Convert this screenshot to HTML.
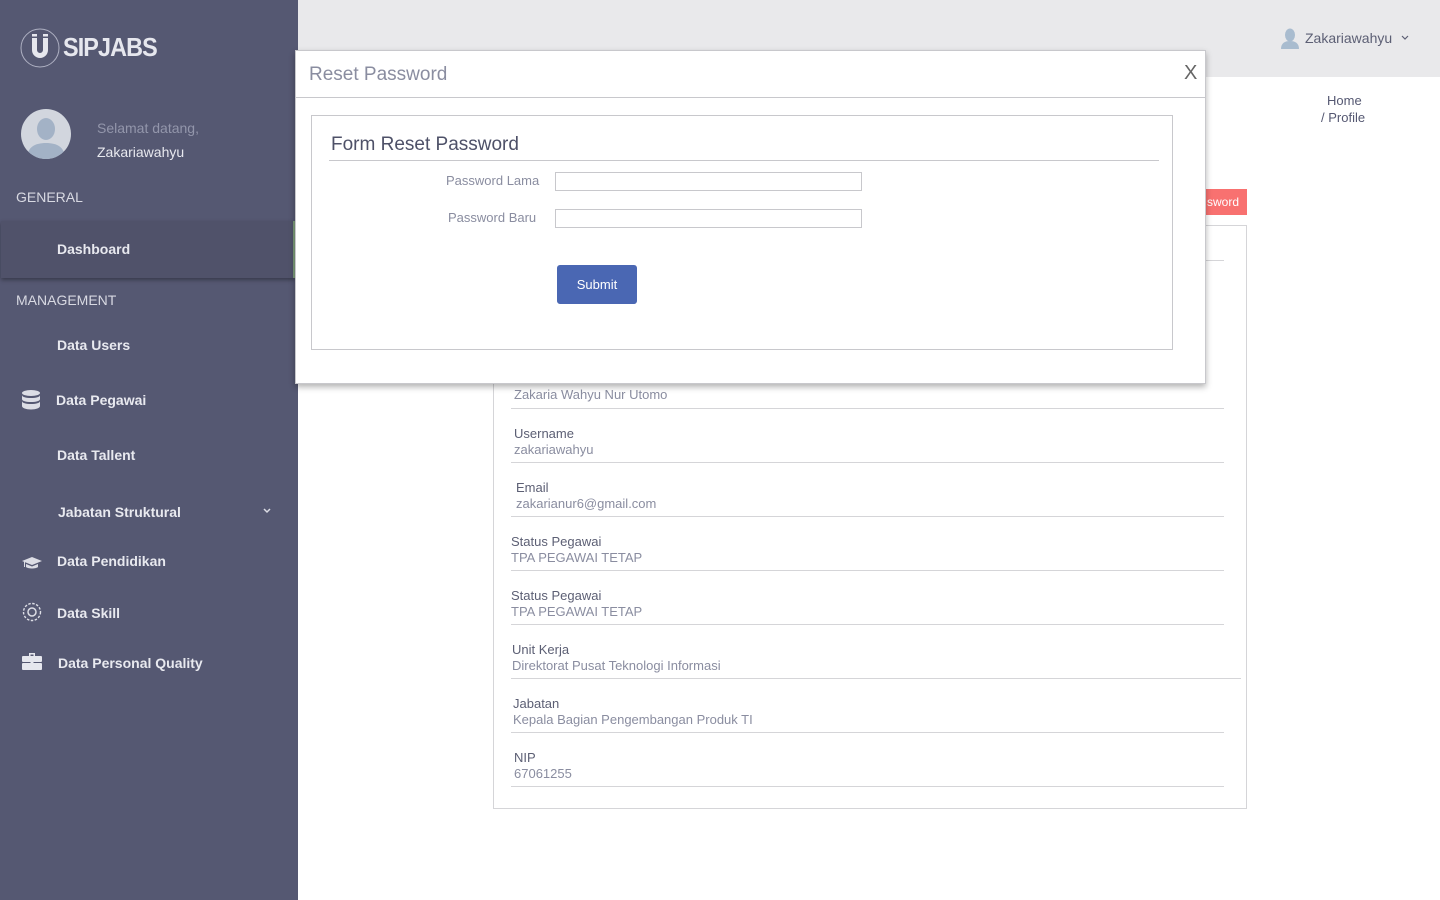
<!DOCTYPE html>
<html><head><meta charset="utf-8"><style>
*{box-sizing:border-box;margin:0;padding:0}
body{width:1440px;height:900px;overflow:hidden;background:#fff;font-family:"Liberation Sans",sans-serif;position:relative}
.sb{position:absolute;left:0;top:0;width:298px;height:900px;background:#555872;color:#e4e5ec}
.a{position:absolute}
.nav{position:absolute;font-size:14px;font-weight:bold;color:#e8e9ef}
.top{position:absolute;left:298px;top:0;width:1142px;height:77px;background:#e9e9eb}
.f{position:absolute;font-size:13px;line-height:16px}
.f .l{color:#5c5f74}
.f .v{color:#8a8da0}
.ln{position:absolute;height:1px;background:#d5d5d8}
</style></head><body>
<div class="sb">
 <svg class="a" style="left:20px;top:28px" width="40" height="40" viewBox="0 0 40 40"><circle cx="20" cy="20" r="19" fill="none" stroke="#aeb0c2" stroke-width="1"/><path d="M12 10v12a8 8 0 0 0 16 0V10h-5v12a3 3 0 0 1-6 0V10z" fill="#e6e7ee"/><rect x="12" y="6" width="5" height="2.5" fill="#e6e7ee"/><rect x="23" y="6" width="5" height="2.5" fill="#e6e7ee"/></svg>
 <div class="a" style="left:63px;top:32px;font-size:26px;font-weight:bold;color:#e6e7ee;letter-spacing:-1px;transform:scaleX(.9);transform-origin:left">SIPJABS</div>
 <svg class="a" style="left:21px;top:109px" width="50" height="50" viewBox="0 0 50 50"><defs><clipPath id="c"><circle cx="25" cy="25" r="25"/></clipPath></defs><circle cx="25" cy="25" r="25" fill="#d2d6de"/><g clip-path="url(#c)" fill="#a3b2c6"><ellipse cx="25" cy="20" rx="9" ry="11"/><path d="M6 50c0-12 8-16 19-16s19 4 19 16z"/></g></svg>
 <div class="a" style="left:97px;top:120px;font-size:14px;color:#9396ab">Selamat datang,</div>
 <div class="a" style="left:97px;top:144px;font-size:14px;color:#e8e9ef">Zakariawahyu</div>
 <div class="a" style="left:16px;top:189px;font-size:14px;color:#d8d9e2">GENERAL</div>
 <div class="a" style="left:1px;top:221px;width:294px;height:57px;background:#50526a;box-shadow:0 2px 4px rgba(0,0,0,.35);border-right:2px solid #7a9a78"></div>
 <div class="nav" style="left:57px;top:241px">Dashboard</div>
 <div class="a" style="left:16px;top:292px;font-size:14px;color:#d8d9e2">MANAGEMENT</div>
 <div class="nav" style="left:57px;top:337px">Data Users</div>
 <svg class="a" style="left:22px;top:390px" width="18" height="20" viewBox="0 0 18 20" fill="#dcdde5"><ellipse cx="9" cy="3" rx="9" ry="3"/><path d="M0 5c0 2 4 3 9 3s9-1 9-3v4c0 2-4 3-9 3S0 11 0 9z"/><path d="M0 11c0 2 4 3 9 3s9-1 9-3v5c0 2-4 3.5-9 3.5S0 18 0 16z"/></svg>
 <div class="nav" style="left:56px;top:392px">Data Pegawai</div>
 <div class="nav" style="left:57px;top:447px">Data Tallent</div>
 <div class="nav" style="left:58px;top:504px">Jabatan Struktural</div>
 <svg class="a" style="left:262px;top:507px" width="10" height="8" viewBox="0 0 10 8"><path d="M2 2l3 3 3-3" fill="none" stroke="#dcdde5" stroke-width="1.5"/></svg>
 <svg class="a" style="left:22px;top:556px" width="20" height="14" viewBox="0 0 20 14" fill="#dcdde5"><path d="M10 1L0 5l10 4 10-4z"/><path d="M4 8v3c2 2 10 2 12 0V8l-6 2.5z"/><rect x="2" y="5" width="1" height="6"/></svg>
 <div class="nav" style="left:57px;top:553px">Data Pendidikan</div>
 <svg class="a" style="left:22px;top:602px" width="20" height="20" viewBox="0 0 20 20"><circle cx="10" cy="10" r="8.5" fill="none" stroke="#dcdde5" stroke-width="1.4" stroke-dasharray="2.5 1.5"/><circle cx="10" cy="10" r="4" fill="none" stroke="#dcdde5" stroke-width="1.5"/></svg>
 <div class="nav" style="left:57px;top:605px">Data Skill</div>
 <svg class="a" style="left:22px;top:653px" width="20" height="17" viewBox="0 0 20 17" fill="#e6e7ee"><path d="M7 0h6v3h-1.5V1.5h-3V3H7z"/><rect x="0" y="3" width="20" height="6" rx="1"/><rect x="0" y="10" width="20" height="7" rx="1"/><rect x="8.5" y="8" width="3" height="3"/></svg>
 <div class="nav" style="left:58px;top:655px">Data Personal Quality</div>
</div>
<div class="top"></div>
<svg class="a" style="left:1281px;top:28px" width="18" height="21" viewBox="0 0 18 21" fill="#a9bccf"><ellipse cx="9" cy="7" rx="5" ry="6.5"/><path d="M0 21c0-6 4-8 9-8s9 2 9 8z"/></svg>
<div class="a" style="left:1305px;top:30px;font-size:14px;color:#5c5f74">Zakariawahyu</div>
<svg class="a" style="left:1400px;top:34px" width="10" height="8" viewBox="0 0 10 8"><path d="M2 2l3 3 3-3" fill="none" stroke="#5c5f74" stroke-width="1.2"/></svg>
<div class="a" style="left:1327px;top:93px;font-size:13px;color:#555872">Home</div>
<div class="a" style="left:1321px;top:110px;font-size:13px;color:#555872">/ Profile</div>
<div class="a" style="left:1190px;top:189px;width:57px;height:26px;background:#f87170;color:#fff;font-size:12px;line-height:26px;text-align:right;padding-right:8px">sword</div>
<div class="a" style="left:493px;top:225px;width:754px;height:584px;border:1px solid #d5d5d8"></div>
<div class="ln" style="left:1200px;top:260px;width:24px"></div>
<div class="f" style="left:514px;top:387px"><div class="v">Zakaria Wahyu Nur Utomo</div></div>
<div class="ln" style="left:511px;top:408px;width:713px"></div>
<div class="f" style="left:514px;top:426px"><div class="l">Username</div><div class="v">zakariawahyu</div></div>
<div class="ln" style="left:511px;top:462px;width:713px"></div>
<div class="f" style="left:516px;top:480px"><div class="l">Email</div><div class="v">zakarianur6@gmail.com</div></div>
<div class="ln" style="left:511px;top:516px;width:713px"></div>
<div class="f" style="left:511px;top:534px"><div class="l">Status Pegawai</div><div class="v">TPA PEGAWAI TETAP</div></div>
<div class="ln" style="left:511px;top:570px;width:713px"></div>
<div class="f" style="left:511px;top:588px"><div class="l">Status Pegawai</div><div class="v">TPA PEGAWAI TETAP</div></div>
<div class="ln" style="left:511px;top:624px;width:713px"></div>
<div class="f" style="left:512px;top:642px"><div class="l">Unit Kerja</div><div class="v">Direktorat Pusat Teknologi Informasi</div></div>
<div class="ln" style="left:511px;top:678px;width:730px"></div>
<div class="f" style="left:513px;top:696px"><div class="l">Jabatan</div><div class="v">Kepala Bagian Pengembangan Produk TI</div></div>
<div class="ln" style="left:511px;top:732px;width:713px"></div>
<div class="f" style="left:514px;top:750px"><div class="l">NIP</div><div class="v">67061255</div></div>
<div class="ln" style="left:511px;top:786px;width:713px"></div>

<div class="a" style="left:295px;top:50px;width:911px;height:334px;background:#fff;border:1px solid #c8c8cc;box-shadow:0 3px 6px rgba(0,0,0,.3)">
 <div class="a" style="left:13px;top:13px;font-size:19px;color:#8a8da0">Reset Password</div>
 <div class="a" style="left:888px;top:11px;font-size:20px;color:#666">X</div>
 <div class="a" style="left:0;top:46px;width:909px;height:1px;background:#c8c8cc"></div>
 <div class="a" style="left:15px;top:64px;width:862px;height:235px;border:1px solid #c8c8cc">
  <div class="a" style="left:19px;top:18px;font-size:19px;color:#4e5168">Form Reset Password</div>
  <div class="a" style="left:17px;top:44px;width:830px;height:1px;background:#c8c8cc"></div>
  <div class="a" style="left:134px;top:57px;font-size:13px;color:#8a8da0">Password Lama</div>
  <div class="a" style="left:243px;top:56px;width:307px;height:19px;border:1px solid #c8c8cc"></div>
  <div class="a" style="left:136px;top:94px;font-size:13px;color:#8a8da0">Password Baru</div>
  <div class="a" style="left:243px;top:93px;width:307px;height:19px;border:1px solid #c8c8cc"></div>
  <div class="a" style="left:245px;top:149px;width:80px;height:39px;background:#4a67b3;border-radius:3px;color:#fff;font-size:13px;line-height:39px;text-align:center">Submit</div>
 </div>
</div>
</body></html>
